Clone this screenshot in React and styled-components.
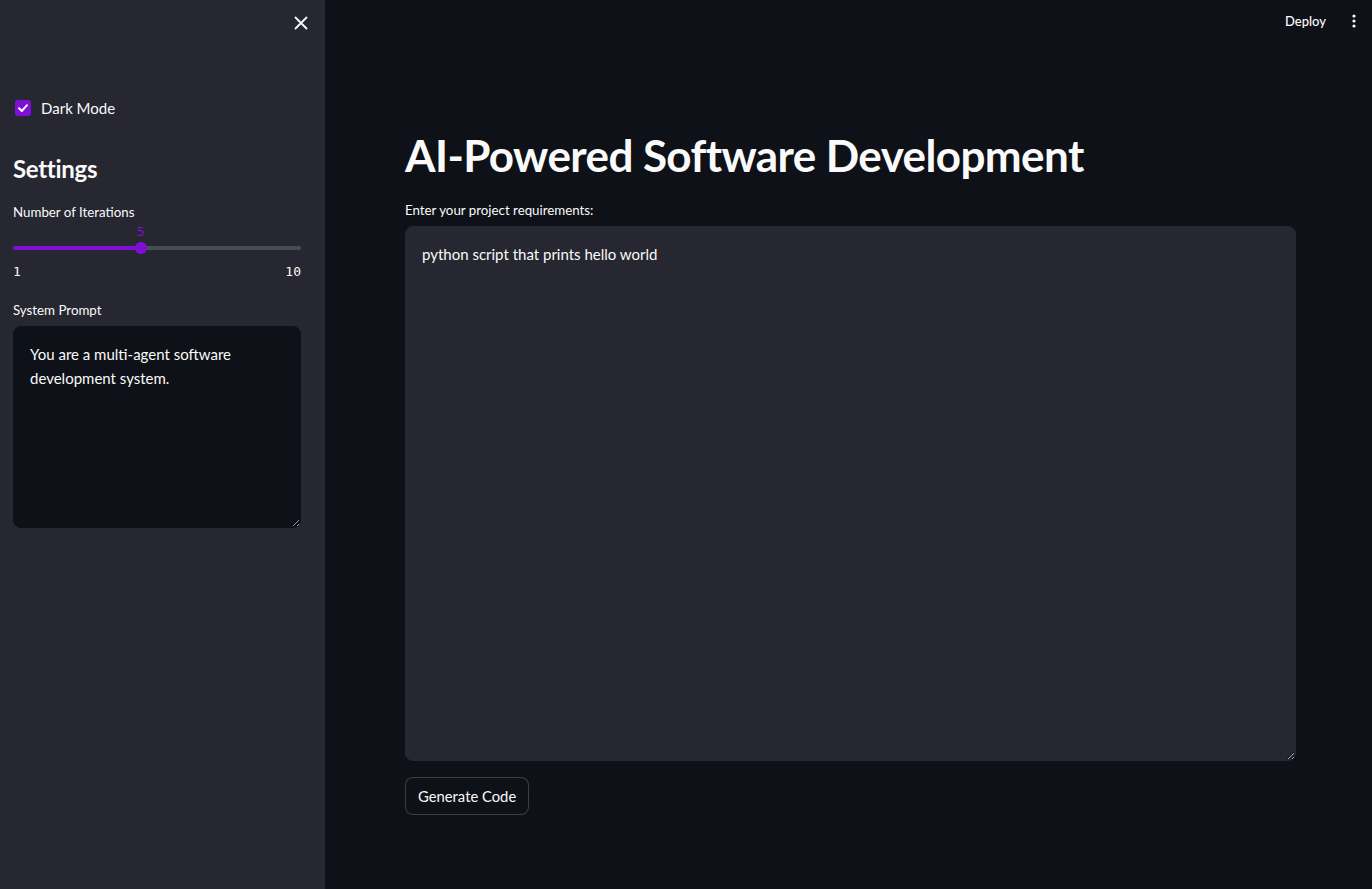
import React from "react";
import styled, { createGlobalStyle } from "styled-components";

const purple = "#7d0fd6";
const sans = `"Lato", "Noto Sans", sans-serif`;
const mono = `"DejaVu Sans Mono", "Liberation Mono", monospace`;

const GlobalStyle = createGlobalStyle`
  html, body {
    margin: 0;
    padding: 0;
    background: #0e1117;
    color: #fafafa;
    font-family: ${sans};
  }
  * { box-sizing: border-box; }
`;

const Page = styled.div`
  display: flex;
  height: 889px;
  overflow: hidden;
`;

const Sidebar = styled.aside`
  width: 325px;
  flex-shrink: 0;
  background: #262730;
  padding: 0 24px 0 13px;
  display: flex;
  flex-direction: column;
`;

const SideTop = styled.div`
  height: 46px;
  display: flex;
  justify-content: flex-end;
  align-items: center;
  margin-right: -12px;
`;

const CloseBtn = styled.button`
  width: 24px;
  height: 24px;
  border: none;
  background: transparent;
  color: #fafafa;
  padding: 0;
  display: flex;
  align-items: center;
  justify-content: center;
`;

const CheckRow = styled.label`
  display: flex;
  align-items: center;
  gap: 10px;
  margin-top: 52px;
  padding-left: 2px;
  font-size: 15px;
  height: 20px;
`;

const CheckBox = styled.span`
  width: 16px;
  height: 16px;
  border-radius: 3px;
  background: ${purple};
  display: flex;
  align-items: center;
  justify-content: center;
`;

const Heading = styled.h2`
  margin: 36px 0 0;
  font-size: 24px;
  font-weight: 700;
  line-height: 30px;
  letter-spacing: -0.3px;
`;

const Label = styled.div`
  font-size: 13.3px;
  line-height: 20px;
  height: 20px;
  margin-top: ${p => p.$top || 0}px;
`;

const SliderBox = styled.div`
  position: relative;
  height: 68px;
`;

const Track = styled.div`
  position: absolute;
  left: 0;
  right: 0;
  top: 24px;
  height: 4px;
  border-radius: 2px;
  background: #4a4b54;
`;

const Fill = styled.div`
  height: 100%;
  border-radius: 2px;
  background: ${purple};
  position: relative;
`;

const Thumb = styled.div`
  position: absolute;
  right: -6px;
  top: -4px;
  width: 12px;
  height: 12px;
  border-radius: 50%;
  background: ${purple};
`;

const ThumbValue = styled.div`
  position: absolute;
  right: -6px;
  width: 12px;
  top: -22px;
  text-align: center;
  font-family: ${mono};
  font-size: 13px;
  color: ${purple};
`;

const Bounds = styled.div`
  position: absolute;
  left: 0;
  right: 0;
  top: 40px;
  display: flex;
  justify-content: space-between;
  font-family: ${mono};
  font-size: 13px;
  line-height: 20px;
`;

const TextArea = styled.textarea`
  display: block;
  width: 100%;
  height: ${p => p.$height}px;
  margin-top: ${p => p.$top}px;
  background: ${p => p.$bg};
  color: #fafafa;
  border: 1px solid ${p => p.$bg};
  border-radius: 8px;
  padding: 15px 16px;
  font-family: ${sans};
  font-size: 15px;
  line-height: 24px;
  outline: none;
  resize: vertical;
  color-scheme: dark;
`;

const Main = styled.main`
  flex: 1;
  display: flex;
  flex-direction: column;
`;

const Header = styled.header`
  height: 42px;
  display: flex;
  justify-content: flex-end;
  align-items: center;
  gap: 26px;
  padding-right: 16px;
`;

const HeaderBtn = styled.span`
  font-size: 13px;
  font-weight: 500;
  display: flex;
  align-items: center;
`;

const Content = styled.div`
  width: 891px;
  margin-left: 80px;
  display: flex;
  flex-direction: column;
`;

const Title = styled.h1`
  margin: 86px 0 0;
  font-size: 44px;
  font-weight: 700;
  line-height: 54px;
  letter-spacing: -0.6px;
`;

const Button = styled.button`
  align-self: flex-start;
  margin-top: 16px;
  height: 38px;
  padding: 0 12px;
  background: #0e1117;
  color: #fafafa;
  border: 1px solid rgba(250, 250, 250, 0.2);
  border-radius: 8px;
  font-family: ${sans};
  font-size: 14.8px;
`;

const Slider = ({ min, max, value }) => {
  const pct = ((value - min) / (max - min)) * 100;
  return (
    <SliderBox>
      <Track>
        <Fill style={{ width: `${pct}%` }}>
          <Thumb />
          <ThumbValue>{value}</ThumbValue>
        </Fill>
      </Track>
      <Bounds>
        <span>{min}</span>
        <span>{max}</span>
      </Bounds>
    </SliderBox>
  );
};

export default function App() {
  return (
    <>
      <GlobalStyle />
      <Page>
        <Sidebar>
          <SideTop>
            <CloseBtn>
              <svg width="14" height="14" viewBox="0 0 14 14">
                <path d="M1.5 1.5 L12.5 12.5 M12.5 1.5 L1.5 12.5" stroke="#fafafa" strokeWidth="1.8" strokeLinecap="round" />
              </svg>
            </CloseBtn>
          </SideTop>
          <CheckRow>
            <CheckBox>
              <svg width="12" height="12" viewBox="0 0 12 12">
                <path d="M2 6.2 L4.8 9 L10 3.2" stroke="#fff" strokeWidth="2" fill="none" strokeLinecap="round" strokeLinejoin="round" />
              </svg>
            </CheckBox>
            Dark Mode
          </CheckRow>
          <Heading>Settings</Heading>
          <Label $top={18}>Number of Iterations</Label>
          <Slider min={1} max={10} value={5} />
          <Label $top={10}>System Prompt</Label>
          <TextArea $height={202} $top={6} $bg="#0e1117" defaultValue="You are a multi-agent software development system." />
        </Sidebar>
        <Main>
          <Header>
            <HeaderBtn>Deploy</HeaderBtn>
            <HeaderBtn>
              <svg width="4" height="16" viewBox="0 0 4 16">
                <circle cx="2" cy="3" r="1.6" fill="#fafafa" />
                <circle cx="2" cy="8" r="1.6" fill="#fafafa" />
                <circle cx="2" cy="13" r="1.6" fill="#fafafa" />
              </svg>
            </HeaderBtn>
          </Header>
          <Content>
            <Title>AI-Powered Software Development</Title>
            <Label $top={18}>Enter your project requirements:</Label>
            <TextArea $height={535} $top={6} $bg="#262730" defaultValue="python script that prints hello world" />
            <Button>Generate Code</Button>
          </Content>
        </Main>
      </Page>
    </>
  );
}
